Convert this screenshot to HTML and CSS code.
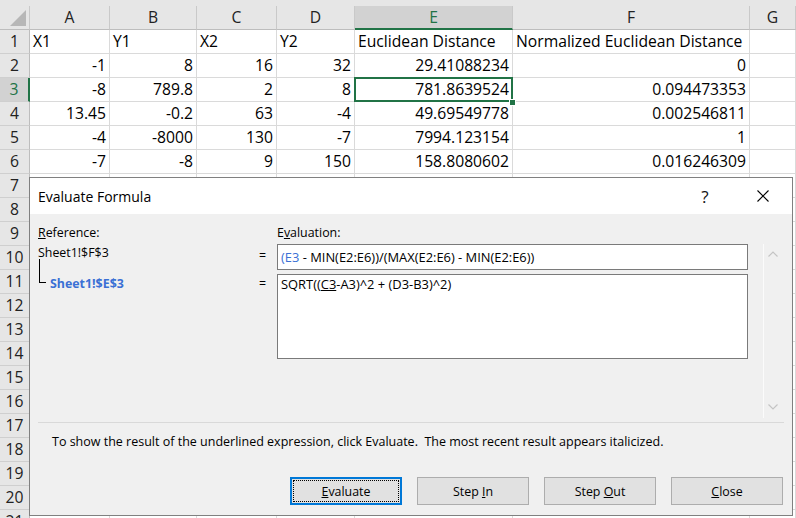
FILE: index.html
```html
<!DOCTYPE html>
<html>
<head>
<meta charset="utf-8">
<link rel="stylesheet" href="styles.css">
</head>
<body>
<div class="sheet">
  <div class="strip"></div>
  <div class="row hdr">
    <div class="c corner"><svg width="16" height="16" viewBox="0 0 16 16"><polygon points="16,0 16,16 0,16" fill="#b7b7b7"/></svg></div>
    <div class="c ch">A</div><div class="c ch">B</div><div class="c ch">C</div><div class="c ch">D</div><div class="c ch ch-sel">E</div><div class="c ch">F</div><div class="c ch">G</div>
  </div>
  <div class="row"><div class="c rh">1</div><div class="c">X1</div><div class="c">Y1</div><div class="c">X2</div><div class="c">Y2</div><div class="c">Euclidean Distance</div><div class="c">Normalized Euclidean Distance</div><div class="c"></div></div>
  <div class="row"><div class="c rh">2</div><div class="c r">-1</div><div class="c r">8</div><div class="c r">16</div><div class="c r">32</div><div class="c r">29.41088234</div><div class="c r">0</div><div class="c"></div></div>
  <div class="row"><div class="c rh rh-sel">3</div><div class="c r">-8</div><div class="c r">789.8</div><div class="c r">2</div><div class="c r">8</div><div class="c r sel">781.8639524</div><div class="c r">0.094473353</div><div class="c"></div></div>
  <div class="row"><div class="c rh">4</div><div class="c r">13.45</div><div class="c r">-0.2</div><div class="c r">63</div><div class="c r">-4</div><div class="c r">49.69549778</div><div class="c r">0.002546811</div><div class="c"></div></div>
  <div class="row"><div class="c rh">5</div><div class="c r">-4</div><div class="c r">-8000</div><div class="c r">130</div><div class="c r">-7</div><div class="c r">7994.123154</div><div class="c r">1</div><div class="c"></div></div>
  <div class="row"><div class="c rh">6</div><div class="c r">-7</div><div class="c r">-8</div><div class="c r">9</div><div class="c r">150</div><div class="c r">158.8080602</div><div class="c r">0.016246309</div><div class="c"></div></div>
  <div class="row"><div class="c rh">7</div><div class="c"></div><div class="c"></div><div class="c"></div><div class="c"></div><div class="c"></div><div class="c"></div><div class="c"></div></div>
  <div class="row"><div class="c rh">8</div><div class="c"></div><div class="c"></div><div class="c"></div><div class="c"></div><div class="c"></div><div class="c"></div><div class="c"></div></div>
  <div class="row"><div class="c rh">9</div><div class="c"></div><div class="c"></div><div class="c"></div><div class="c"></div><div class="c"></div><div class="c"></div><div class="c"></div></div>
  <div class="row"><div class="c rh">10</div><div class="c"></div><div class="c"></div><div class="c"></div><div class="c"></div><div class="c"></div><div class="c"></div><div class="c"></div></div>
  <div class="row"><div class="c rh">11</div><div class="c"></div><div class="c"></div><div class="c"></div><div class="c"></div><div class="c"></div><div class="c"></div><div class="c"></div></div>
  <div class="row"><div class="c rh">12</div><div class="c"></div><div class="c"></div><div class="c"></div><div class="c"></div><div class="c"></div><div class="c"></div><div class="c"></div></div>
  <div class="row"><div class="c rh">13</div><div class="c"></div><div class="c"></div><div class="c"></div><div class="c"></div><div class="c"></div><div class="c"></div><div class="c"></div></div>
  <div class="row"><div class="c rh">14</div><div class="c"></div><div class="c"></div><div class="c"></div><div class="c"></div><div class="c"></div><div class="c"></div><div class="c"></div></div>
  <div class="row"><div class="c rh">15</div><div class="c"></div><div class="c"></div><div class="c"></div><div class="c"></div><div class="c"></div><div class="c"></div><div class="c"></div></div>
  <div class="row"><div class="c rh">16</div><div class="c"></div><div class="c"></div><div class="c"></div><div class="c"></div><div class="c"></div><div class="c"></div><div class="c"></div></div>
  <div class="row"><div class="c rh">17</div><div class="c"></div><div class="c"></div><div class="c"></div><div class="c"></div><div class="c"></div><div class="c"></div><div class="c"></div></div>
  <div class="row"><div class="c rh">18</div><div class="c"></div><div class="c"></div><div class="c"></div><div class="c"></div><div class="c"></div><div class="c"></div><div class="c"></div></div>
  <div class="row"><div class="c rh">19</div><div class="c"></div><div class="c"></div><div class="c"></div><div class="c"></div><div class="c"></div><div class="c"></div><div class="c"></div></div>
  <div class="row"><div class="c rh">20</div><div class="c"></div><div class="c"></div><div class="c"></div><div class="c"></div><div class="c"></div><div class="c"></div><div class="c"></div></div>
  <div class="row"><div class="c rh">21</div><div class="c"></div><div class="c"></div><div class="c"></div><div class="c"></div><div class="c"></div><div class="c"></div><div class="c"></div></div>
</div>

<div class="dlg">
  <div class="titlebar">
    <div class="title">Evaluate Formula</div>
    <div class="tb-help">?</div>
    <div class="tb-close"><svg width="12" height="12" viewBox="0 0 12 12"><path d="M0.5 0.5 L11.5 11.5 M11.5 0.5 L0.5 11.5" stroke="#000" stroke-width="1.1" fill="none"/></svg></div>
  </div>
  <div class="main">
    <div class="lbl"><u>R</u>eference:</div>
    <div></div>
    <div class="lbl">E<u>v</u>aluation:</div>
    <div></div>

    <div class="ref">Sheet1!$F$3</div>
    <div class="eq">=</div>
    <div class="box box1"><span class="blue">(E3</span> - MIN(E2:E6))/(MAX(E2:E6) - MIN(E2:E6))</div>
    <div class="scroll">
      <svg width="10" height="6" viewBox="0 0 10 6"><polyline points="0.5,5.5 5,1 9.5,5.5" stroke="#c4c4c4" stroke-width="1.2" fill="none"/></svg>
      <svg width="10" height="6" viewBox="0 0 10 6"><polyline points="0.5,0.5 5,5 9.5,0.5" stroke="#c4c4c4" stroke-width="1.2" fill="none"/></svg>
    </div>

    <div class="ref2"><span class="tree"></span><span class="sub">Sheet1!$E$3</span></div>
    <div class="eq eq2">=</div>
    <div class="box box2">SQRT((<u>C3</u>-A3)^2 + (D3-B3)^2)</div>
  </div>
  <div class="sep"></div>
  <div class="msg">To show the result of the underlined expression, click Evaluate.&nbsp; The most recent result appears italicized.</div>
  <div class="btns">
    <div class="btn btn-def"><span><u>E</u>valuate</span></div>
    <div class="btn"><span>Step <u>I</u>n</span></div>
    <div class="btn"><span>Step <u>O</u>ut</span></div>
    <div class="btn"><span><u>C</u>lose</span></div>
  </div>
</div>
</body>
</html>
```

FILE: styles.css
```css
html, body {
  margin: 0;
  padding: 0;
}
body {
  width: 796px;
  height: 518px;
  overflow: hidden;
  background: #fff;
  position: relative;
  font-family: "Open Sans", "Noto Sans", sans-serif;
  color: #000;
}

/* ---------- spreadsheet ---------- */
.sheet {
  font-size: 15.7px;
}
.strip {
  height: 6px;
  background: #e6e6e6;
}
.row {
  display: grid;
  grid-template-columns: 30px 80px 87px 80px 78px 158px 237px 46px;
  height: 24px;
}
.c {
  box-sizing: border-box;
  border-right: 1px solid #dadada;
  border-bottom: 1px solid #dadada;
  padding: 0 3px;
  line-height: 23px;
  white-space: nowrap;
  overflow: hidden;
}
.r {
  text-align: right;
}
.hdr .c {
  background: #e6e6e6;
  border-right-color: #c9c9c9;
  border-bottom-color: #bdbdbd;
  text-align: center;
  color: #222;
}
.corner {
  display: flex;
  align-items: flex-end;
  justify-content: flex-end;
  padding: 0 3px 3px 0 !important;
}
.hdr .ch-sel {
  background: #d2d2d2;
  color: #217346;
  border-bottom: 2px solid #217346;
  line-height: 22px;
}
.rh {
  background: #e6e6e6;
  border-right-color: #bdbdbd;
  border-bottom-color: #cfcfcf;
  text-align: center;
  padding: 0;
  color: #222;
}
.rh-sel {
  background: #d2d2d2;
  color: #217346;
  border-right: 2px solid #217346;
}
.sel {
  position: relative;
  overflow: visible;
}
.sel::before {
  content: "";
  position: absolute;
  left: -1px;
  top: -1px;
  right: -1px;
  bottom: -1px;
  border: 2px solid #217346;
}
.sel::after {
  content: "";
  position: absolute;
  right: -4px;
  bottom: -5px;
  width: 5px;
  height: 5px;
  background: #217346;
  border: 1px solid #fff;
}

/* ---------- dialog ---------- */
.dlg {
  position: absolute;
  left: 29px;
  top: 177px;
  width: 764px;
  height: 339px;
  box-sizing: border-box;
  border: 1px solid #808080;
  background: #f0f0f0;
  display: flex;
  flex-direction: column;
  font-size: 12.4px;
}
.titlebar {
  height: 36px;
  background: #fff;
  display: flex;
  align-items: center;
  padding-left: 8px;
  flex: none;
}
.title {
  flex: 1;
  font-size: 14px;
}
.tb-help {
  width: 36px;
  text-align: center;
  font-size: 17px;
  color: #111;
}
.tb-close {
  width: 36px;
  margin: 0 11px 0 22px;
  display: flex;
  justify-content: center;
}
.main {
  display: grid;
  grid-template-columns: 220px 19px 471px 33px;
  grid-template-rows: 20px 30px 144px;
  padding: 10px 0 0 8px;
  flex: none;
}
.lbl {
  line-height: 18px;
}
.ref {
  line-height: 18px;
}
.eq {
  line-height: 24px;
  padding-left: 1px;
}
.eq2 {
  line-height: 20px;
}
.box {
  box-sizing: border-box;
  background: #fff;
  border: 1px solid #7a7a7a;
  padding: 0 3px;
  white-space: nowrap;
  font-size: 12.9px;
}
.box1 {
  height: 26px;
  line-height: 24px;
}
.box2 {
  height: 85px;
  line-height: 18px;
}
.blue {
  color: #3a70d5;
}
.scroll {
  grid-column: 4;
  grid-row: 2 / 4;
  margin-left: 15px;
  width: 18px;
  border-left: 1px solid #fbfbfb;
  display: flex;
  flex-direction: column;
  align-items: center;
  justify-content: space-between;
  padding: 7px 0 8px;
  box-sizing: border-box;
}
.ref2 {
  display: flex;
  align-items: flex-start;
}
.tree {
  display: block;
  margin: -15px 0 0 1px;
  width: 6px;
  height: 23px;
  border-left: 1px solid #000;
  border-bottom: 1px solid #000;
}
.sub {
  margin-left: 4px;
  line-height: 20px;
  font-weight: 700;
  font-size: 12.4px;
  color: #3a70d5;
}
.sep {
  margin: 4px 8px 0 8px;
  height: 1px;
  background: #d9d9d9;
  flex: none;
}
.msg {
  margin: 10px 0 0 22px;
  line-height: 17px;
  white-space: nowrap;
  font-size: 12.5px;
}
.btns {
  margin-top: 27px;
  display: flex;
  justify-content: flex-end;
  gap: 15px;
  padding-right: 9px;
}
.btn {
  box-sizing: border-box;
  width: 112px;
  height: 28px;
  background: #e1e1e1;
  border: 1px solid #adadad;
  display: flex;
  align-items: center;
  justify-content: center;
  white-space: pre;
}
.btn-def {
  border: 2px solid #0078d7;
  outline: 1px dotted #000;
  outline-offset: -4px;
}
```
